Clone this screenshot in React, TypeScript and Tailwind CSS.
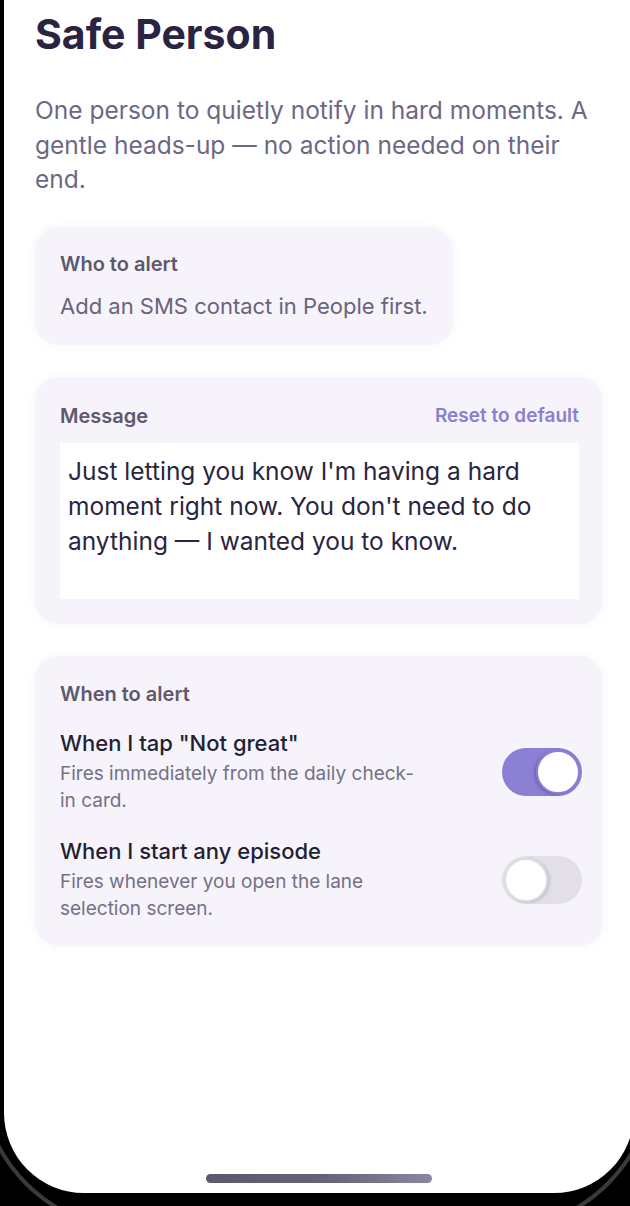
import React from "react";

const font = { fontFamily: "Inter, 'Noto Sans', sans-serif" };

function Toggle({ on }: { on: boolean }) {
  return on ? (
    <div className="flex h-[48px] w-[80px] shrink-0 items-center justify-end rounded-full bg-[#8b80d3] p-[2px]">
      <div className="h-[44px] w-[44px] rounded-full border-[2px] border-[#8b80d3] bg-white shadow-[-2px_1px_3px_rgba(60,40,120,0.3)]" />
    </div>
  ) : (
    <div className="flex h-[48px] w-[80px] shrink-0 items-center justify-start rounded-full bg-[#e2dfe9] p-[2px]">
      <div className="h-[44px] w-[44px] rounded-full border-[2px] border-[#dedbe5] bg-white shadow-[2px_1px_3px_rgba(60,50,90,0.18)]" />
    </div>
  );
}

function Row({ title, lines, on }: { title: string; lines: string[]; on: boolean }) {
  return (
    <div className="flex items-center justify-between">
      <div className="whitespace-nowrap">
        <div className="text-[22px] font-medium leading-[28px] text-[#231f33]">{title}</div>
        <div className="mt-[3px] text-[19px] leading-[27.5px] text-[#757086]">
          {lines.map((l, i) => (
            <div key={i}>{l}</div>
          ))}
        </div>
      </div>
      <Toggle on={on} />
    </div>
  );
}

export default function App() {
  return (
    <div className="relative h-[1206px] w-[630px] overflow-hidden bg-black" style={font}>
      {/* bezel outline */}
      <div className="absolute bottom-[-26px] left-[-22px] right-[-26px] top-[-400px] rounded-[160px] border-[4px] border-[#3a3a3c]" />

      <div className="relative ml-[4px] flex h-[1193px] w-[630px] flex-col rounded-b-[80px] bg-white">
        <div className="pl-[31px] pr-[36px] pt-[10px]">
          <h1 className="text-[41px] font-bold leading-[48px] text-[#2a2342]">Safe Person</h1>
          <p className="mt-[35px] text-[24.5px] leading-[34.5px] text-[#6d6884]">
            One person to quietly notify in hard moments. A gentle heads-up — no action needed on their end.
          </p>

          <div className="mt-[30px] w-fit rounded-[24px] bg-[#f6f3fa] px-[25px] pb-[25px] pt-[25px] shadow-[0_0_10px_rgba(90,70,150,0.05)]">
            <div className="text-[20px] font-semibold leading-[24px] text-[#5d586e]">Who to alert</div>
            <div className="mt-[16px] text-[22px] leading-[28px] text-[#69647a]">Add an SMS contact in People first.</div>
          </div>

          <div className="mt-[32px] w-[568px] rounded-[24px] bg-[#f6f3fa] pb-[25px] pl-[25px] pr-[24px] pt-[27px] shadow-[0_0_10px_rgba(90,70,150,0.05)]">
            <div className="flex items-center justify-between">
              <div className="text-[20px] font-semibold leading-[24px] text-[#5d586e]">Message</div>
              <div className="text-[19px] font-semibold leading-[24px] text-[#8a7fd0]">Reset to default</div>
            </div>
            <div className="mt-[15px] h-[156px] bg-white pl-[8px] pr-[10px] pt-[11px] text-[24.5px] leading-[35px] text-[#2a2540]">
              Just letting you know I'm having a hard moment right now. You don't need to do anything — I wanted you to know.
            </div>
          </div>

          <div className="mt-[32px] w-[568px] rounded-[24px] bg-[#f6f3fa] pb-[23px] pl-[25px] pr-[21px] pt-[26px] shadow-[0_0_10px_rgba(90,70,150,0.05)]">
            <div className="text-[20px] font-semibold leading-[24px] text-[#5d586e]">When to alert</div>
            <div className="mt-[23px] flex flex-col gap-[22px]">
              <Row title={'When I tap "Not great"'} lines={["Fires immediately from the daily check-", "in card."]} on />
              <Row title="When I start any episode" lines={["Fires whenever you open the lane", "selection screen."]} on={false} />
            </div>
          </div>
        </div>

        <div className="mb-[10px] mt-auto ml-[202px] h-[9px] w-[226px] rounded-full bg-gradient-to-r from-[#5c596c] via-[#656275] to-[#8a86a0]" />
      </div>
    </div>
  );
}
